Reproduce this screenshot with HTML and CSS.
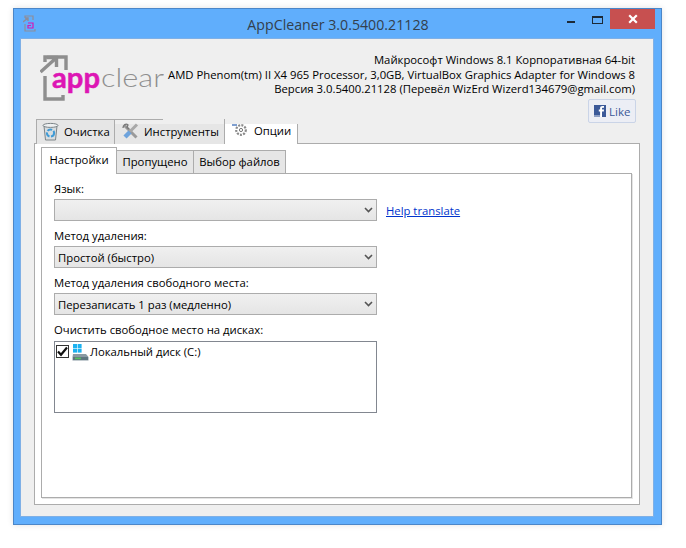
FILE: index.html
```html
<!DOCTYPE html>
<html lang="ru">
<head>
<meta charset="utf-8">
<title>AppCleaner</title>
<link rel="stylesheet" href="styles.css">
</head>
<body>
<div class="window">
  <div class="titlebar">
    <div class="title-left">
      <svg class="app-icon" width="14" height="17" viewBox="0 0 14 17" fill="none">
        <path d="M2 3V1H10V5M2 9V16H12V14" stroke="#8d8d9a" stroke-width="1.2"/>
        <path d="M0 7L5 3M2 3H5V6" stroke="#8d8d9a" stroke-width="1.4"/>
        <path d="M5 8H10V13H5V10.5H8" stroke="#d516b5" stroke-width="1.2"/>
      </svg>
    </div>
    <div class="title-text">AppCleaner 3.0.5400.21128</div>
    <div class="controls">
      <div class="ctl"><span class="min-glyph"></span></div>
      <div class="ctl"><span class="max-glyph"></span></div>
      <div class="close">
        <svg width="10" height="10" viewBox="0 0 10 10"><path d="M1.2 1.2L8.8 8.8M8.8 1.2L1.2 8.8" stroke="#fff" stroke-width="2.2"/></svg>
      </div>
    </div>
  </div>
  <div class="client">
    <div class="header">
      <svg class="logo" width="124" height="50" viewBox="0 0 124 50" fill="none">
        <path d="M5 8V3H26V16" stroke="#8e8e8e" stroke-width="3.4"/>
        <path d="M0.5 18L15 5M7 3.5H16.5V13" stroke="#8e8e8e" stroke-width="3.4"/>
        <path d="M5 22V45H23V41" stroke="#8e8e8e" stroke-width="3.4"/>
        <text class="logo-app" x="12" y="34" textLength="48" lengthAdjust="spacingAndGlyphs">app</text>
        <text class="logo-clear" x="61" y="33" textLength="63" lengthAdjust="spacingAndGlyphs">clear</text>
      </svg>
      <div class="info">
        <div class="info-line">Майкрософт Windows 8.1 Корпоративная 64-bit</div>
        <div class="info-line">AMD Phenom(tm) II X4 965 Processor, 3,0GB, VirtualBox Graphics Adapter for Windows 8</div>
        <div class="info-line">Версия 3.0.5400.21128 (Перевёл WizErd Wizerd134679@gmail.com)</div>
        <div class="like">
          <svg width="12" height="12" viewBox="0 0 12 12"><rect width="12" height="12" fill="#3b5998"/><rect y="10" width="7" height="2" fill="#8b9dc3"/><path d="M8 12V6.5H9.8L10 4.6H8V3.6C8 3 8.2 2.7 8.9 2.7H10V1H8.5C6.8 1 6.1 1.9 6.1 3.3V4.6H4.8V6.5H6.1V12Z" fill="#fff"/></svg>
          <span>Like</span>
        </div>
      </div>
    </div>
    <div class="tabs">
      <div class="tab tab-clean">
        <svg width="17" height="19" viewBox="0 0 17 19" fill="none">
          <path d="M2 4H15L13.5 18H3.5Z" fill="#d8dde0" stroke="#7c8488"/>
          <ellipse cx="8.5" cy="3.4" rx="7.5" ry="2" fill="#eef0f1" stroke="#7c8488"/>
          <circle cx="8.5" cy="11" r="3.6" fill="none" stroke="#3f9bd6" stroke-width="2" stroke-dasharray="5 1.6"/>
        </svg>
        <span>Очистка</span>
      </div>
      <div class="tab tab-tools">
        <svg width="17" height="17" viewBox="0 0 17 17" fill="none">
          <path d="M2.5 2.5L14.5 14.5" stroke="#9a9a9a" stroke-width="3"/>
          <path d="M1 5C1 2 4 0 6 2L5 4.5L7 6" stroke="#777" stroke-width="1.3"/>
          <path d="M15 1.5L8 8.5" stroke="#a8a8a8" stroke-width="3"/>
          <path d="M8 9L3 14" stroke="#6ea3dc" stroke-width="4.4"/>
        </svg>
        <span>Инструменты</span>
      </div>
      <div class="tab tab-active">
        <svg class="gear" width="16" height="13" viewBox="0 0 16 13" fill="none">
          <circle cx="9" cy="6" r="4.8" stroke="#8a8a8a" stroke-width="2.2" stroke-dasharray="2 1.2"/>
          <circle cx="9" cy="6" r="1.6" stroke="#777"/>
          <path d="M0 0H5V2H0Z" fill="#7f9fd0"/>
        </svg>
        <span class="tab-active-text">Опции</span>
      </div>
    </div>
    <div class="outer-panel">
      <div class="subtabs">
        <div class="subtab subtab-active">Настройки</div>
        <div class="subtab subtab-second">Пропущено</div>
        <div class="subtab subtab-third">Выбор файлов</div>
      </div>
      <div class="inner-panel">
        <div class="label">Язык:</div>
        <div class="row">
          <div class="combo"><span></span><svg class="chev" width="9" height="6" viewBox="0 0 9 6" fill="none"><path d="M1 1L4.5 4.5L8 1" stroke="#555" stroke-width="1.6"/></svg></div>
          <a class="help" href="#">Help translate</a>
        </div>
        <div class="label">Метод удаления:</div>
        <div class="row">
          <div class="combo"><span>Простой (быстро)</span><svg class="chev" width="9" height="6" viewBox="0 0 9 6" fill="none"><path d="M1 1L4.5 4.5L8 1" stroke="#555" stroke-width="1.6"/></svg></div>
        </div>
        <div class="label">Метод удаления свободного места:</div>
        <div class="row">
          <div class="combo"><span>Перезаписать 1 раз (медленно)</span><svg class="chev" width="9" height="6" viewBox="0 0 9 6" fill="none"><path d="M1 1L4.5 4.5L8 1" stroke="#555" stroke-width="1.6"/></svg></div>
        </div>
        <div class="label label-list">Очистить свободное место на дисках:</div>
        <div class="disk-list">
          <div class="disk">
            <div class="check">
              <svg width="11" height="11" viewBox="0 0 11 11" fill="none"><path d="M1 5.5L4 8.8L10 1.5" stroke="#111" stroke-width="2.2"/></svg>
            </div>
            <svg class="drive" width="17" height="17" viewBox="0 0 17 17">
              <rect x="1" y="0" width="4" height="4" fill="#1cb1f0"/>
              <rect x="5.6" y="0" width="4" height="4" fill="#1cb1f0"/>
              <rect x="1" y="4.6" width="4" height="4" fill="#1cb1f0"/>
              <rect x="5.6" y="4.6" width="4" height="4" fill="#1cb1f0"/>
              <path d="M1 10H14L16.5 13V16.5H0.5V13Z" fill="#8a9aa3"/>
              <rect x="1" y="13" width="15" height="3" fill="#5f7680"/>
              <rect x="3" y="13.6" width="6" height="1.6" fill="#55c060"/>
            </svg>
            <span>Локальный диск (C:)</span>
          </div>
        </div>
      </div>
    </div>
  </div>
</div>
</body>
</html>
```
FILE: styles.css
```css
* { box-sizing: border-box; }
html, body { margin: 0; padding: 0; background: #fff; }
body {
  width: 686px;
  height: 548px;
  overflow: hidden;
  font-family: "Open Sans", "Noto Sans", sans-serif;
  font-size: 11.3px;
  line-height: 15px;
  color: #000;
}
.window {
  margin: 8px 0 0 13px;
  width: 649px;
  height: 517px;
  background: #60aefc;
  border: 1px solid #4b86c8;
  box-shadow: 0 0 6px rgba(0, 0, 0, 0.12);
  padding: 0 7px 7px 6px;
  display: flex;
  flex-direction: column;
}
.titlebar {
  height: 29px;
  flex: none;
  display: grid;
  grid-template-columns: 1fr auto 1fr;
  margin-right: -1px;
}
.title-left { padding: 6px 0 0 3px; }
.app-icon { display: block; }
.title-text {
  font-size: 14.2px;
  line-height: 31px;
  color: #33404d;
  margin-left: 1px;
}
.controls { display: flex; justify-content: flex-end; align-items: flex-start; }
.ctl { width: 26px; height: 20px; display: flex; justify-content: center; }
.min-glyph { width: 8px; height: 2px; margin-top: 12px; background: #1c2a38; }
.max-glyph { width: 11px; height: 8px; margin-top: 7px; border: 1px solid #1c2a38; border-top-width: 2px; }
.close {
  width: 45px;
  height: 20px;
  background: #c75050;
  display: flex;
  align-items: center;
  justify-content: center;
}
.client {
  flex: 1;
  background: #efefef;
  border: 1px solid #7fb0e6;
  display: flex;
  flex-direction: column;
  padding: 0 14px 13px 13px;
  min-height: 0;
}
.header { display: flex; height: 85px; flex: none; margin-left: 6px; }
.logo { flex: none; margin-top: 15px; }
.logo-app { font-family: "Lato", "Open Sans", sans-serif; font-weight: 700; font-size: 28px; fill: #dd16b4; stroke: #dd16b4; stroke-width: 0.5px; }
.logo-clear { font-family: "Lato", "Open Sans", sans-serif; font-weight: 300; font-size: 26px; fill: #8f8f8f; }
.info { flex: 1; padding: 13px 4px 0 0; text-align: right; display: flex; flex-direction: column; align-items: flex-end; }
.info-line { height: 14.7px; white-space: nowrap; }
.like {
  margin-top: 3px;
  margin-right: -1px;
  width: 48px;
  height: 24px;
  background: #eceef5;
  border: 1px solid #cad4e7;
  border-radius: 2px;
  display: flex;
  align-items: center;
  padding-left: 5px;
  gap: 3px;
  color: #3b5998;
  font-size: 11.5px;
}
.tabs {
  display: flex;
  height: 25px;
  margin: -5px 0 -1px 2px;
  flex: none;
  align-items: flex-end;
  position: relative;
  z-index: 1;
}
.tab { display: flex; align-items: center; height: 25px; }
.tab-clean {
  width: 79px;
  background: #e6e6e6;
  border: 1px solid #acacac;
  border-bottom: 0;
  padding: 0 0 1px 5px;
  gap: 5px;
}
.tab-tools {
  width: 110px;
  background: linear-gradient(#acacac, #acacac) 0 0 / 48px 1px no-repeat, linear-gradient(#efefef, #efefef) 0 0 / 100% 5px no-repeat, #e6e6e6;
  border-right: 1px solid #acacac;
  padding: 0 0 0 7px;
  gap: 5px;
}
.tab-active {
  width: 73px;
  height: 20px;
  background: #fff;
  border-right: 1px solid #acacac;
  padding: 0 0 0 7px;
  gap: 6px;
  align-items: flex-start;
  overflow: hidden;
}
.tab-active-text { line-height: 13px; }
.outer-panel {
  width: 606px;
  height: 362px;
  flex: none;
  background: #fff;
  border: 1px solid #acacac;
  padding: 4px 7px 6px 6px;
  display: flex;
  flex-direction: column;
}
.subtabs { display: flex; align-items: flex-end; height: 26px; flex: none; position: relative; z-index: 1; margin-bottom: -1px; }
.subtab {
  height: 24px;
  background: #e6e6e6;
  border: 1px solid #acacac;
  border-left: 0;
  line-height: 22px;
  text-align: center;
  white-space: nowrap;
}
.subtab-active {
  width: 76px;
  height: 27px;
  background: #fff;
  border-left: 1px solid #acacac;
  border-bottom: 0;
  line-height: 24px;
}
.subtab-second { width: 77px; }
.subtab-third { width: 92px; }
.inner-panel {
  flex: 1;
  border: 1px solid #acacac;
  box-shadow: 1px 1px 0 #e4e4e4;
  padding: 8px 0 0 12px;
  min-height: 0;
}
.label { height: 15px; line-height: 13px; margin-bottom: 2px; white-space: nowrap; }
.label-list { margin-bottom: 3px; }
.row { display: flex; align-items: center; gap: 9px; margin-bottom: 8px; }
.combo {
  width: 323px;
  height: 22px;
  background: linear-gradient(#f0f0f0, #e5e5e5);
  border: 1px solid #acacac;
  display: flex;
  align-items: center;
  justify-content: space-between;
  padding: 0 3px 0 3px;
  white-space: nowrap;
}
.chev { flex: none; }
.help { color: #0033cc; text-decoration: underline; white-space: nowrap; }
.disk-list {
  width: 323px;
  height: 72px;
  border: 1px solid #828790;
  padding: 2px 0 0 1px;
}
.disk { display: flex; align-items: flex-start; }
.disk span { margin-left: 1px; }
.check {
  width: 13px;
  height: 13px;
  border: 1px solid #333;
  background: #fff;
  display: flex;
  align-items: center;
  justify-content: center;
  margin: 1px 3px 0 0;
  flex: none;
}
.drive { flex: none; }
```
